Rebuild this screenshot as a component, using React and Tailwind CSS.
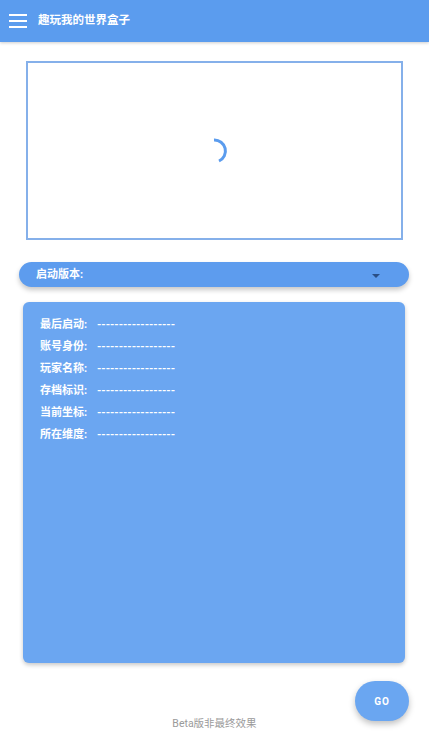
import React from "react";

const rows = ["最后启动", "账号身份", "玩家名称", "存档标识", "当前坐标", "所在维度"];

const font = { fontFamily: "Roboto, 'Noto Sans CJK SC', sans-serif" };

export default function App() {
    return (
        <div className="w-[429px] h-[746px] bg-white flex flex-col relative overflow-hidden" style={font}>
            {/* Top bar */}
            <header className="h-[42px] bg-[#5b9cee] flex items-center px-[8px] shadow-[0_1px_3px_rgba(0,0,0,0.2)] shrink-0">
                <div className="w-[18px] h-[14px] flex flex-col justify-between ml-[1px]">
                    <span className="block h-[2px] bg-white" />
                    <span className="block h-[2px] bg-white" />
                    <span className="block h-[2px] bg-white" />
                </div>
                <h1 className="ml-[11px] text-white text-[11.5px] font-bold">趣玩我的世界盒子</h1>
            </header>

            {/* Preview box */}
            <div className="mt-[19px] mx-[26px] h-[179px] border-2 border-[#85b0ea] flex items-center justify-center">
                <svg width="28" height="28" viewBox="0 0 28 28" className="ml-[2px] mt-[1px]">
                    <path d="M12 3 A11 11 0 0 1 17 24" fill="none" stroke="#5b9cee" strokeWidth="3" strokeLinecap="butt" />
                </svg>
            </div>

            {/* Version select */}
            <div className="mt-[22px] mx-[19px] mr-[20px] h-[25px] rounded-full bg-[#5d9cee] shadow-[0_3px_5px_rgba(0,0,0,0.22)] flex items-center justify-between pl-[17px] pr-[29px] pt-[2px]">
                <span className="text-white text-[11px] font-bold">启动版本:</span>
                <span className="w-0 h-0 border-l-[4px] border-r-[4px] border-t-[4px] border-l-transparent border-r-transparent border-t-[#2a4f86]" />
            </div>

            {/* Info card */}
            <div className="mt-[15px] mx-[23px] mr-[24px] h-[361px] rounded-[6px] bg-[#6ba6f1] shadow-[0_2px_4px_rgba(0,0,0,0.22)] pt-[15px] pl-[17px] flex flex-col gap-[6px]">
                {rows.map((label) => (
                    <div key={label} className="flex items-center h-[16px] text-white text-[11px] font-bold">
                        <span className="w-[57px] shrink-0">{label}:</span>
                        <span>------------------</span>
                    </div>
                ))}
            </div>

            {/* Bottom area */}
            <div className="relative flex-1">
                <button className="absolute right-[20px] top-[18px] w-[54px] h-[40px] rounded-full bg-[#6aa6f1] shadow-[0_3px_6px_rgba(0,0,0,0.25)] text-white text-[10px] font-bold tracking-[1px]">
                    GO
                </button>
                <p className="absolute left-0 right-0 top-[53px] text-center text-[10.5px] text-[#9a9a9a]">Beta版非最终效果</p>
            </div>
        </div>
    );
}
